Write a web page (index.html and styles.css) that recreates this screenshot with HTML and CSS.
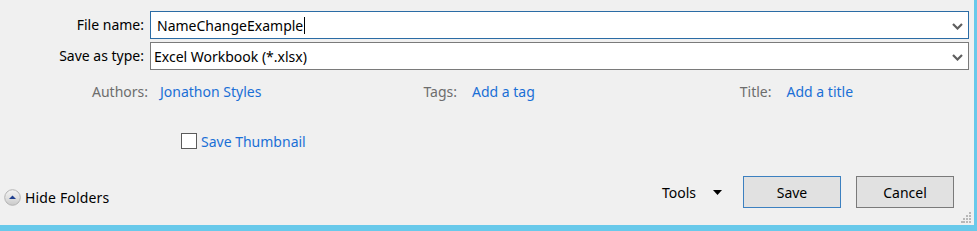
FILE: index.html
```html
<!DOCTYPE html>
<html>
<head>
<meta charset="utf-8">
<link rel="stylesheet" href="styles.css">
</head>
<body>
<div class="window">
  <div class="dialog">
    <div class="fields">
      <label class="label">File name:</label>
      <div class="combo combo-active">
        <span class="value">NameChangeExample</span><span class="caret"></span>
        <svg class="chev" width="11" height="7" viewBox="0 0 11 7"><path d="M1 1 L5.5 5.5 L10 1" fill="none" stroke="#5f5f5f" stroke-width="2.2"/></svg>
      </div>
      <label class="label">Save as type:</label>
      <div class="combo">
        <span class="value value-type">Excel Workbook (*.xlsx)</span>
        <svg class="chev" width="11" height="7" viewBox="0 0 11 7"><path d="M1 1 L5.5 5.5 L10 1" fill="none" stroke="#5f5f5f" stroke-width="2.2"/></svg>
      </div>
    </div>

    <div class="meta">
      <div class="meta-item meta-authors"><span class="meta-label">Authors:</span><span class="link">Jonathon Styles</span></div>
      <div class="meta-item meta-tags"><span class="meta-label">Tags:</span><span class="link">Add a tag</span></div>
      <div class="meta-item meta-title"><span class="meta-label">Title:</span><span class="link">Add a title</span></div>
    </div>

    <div class="thumb">
      <span class="checkbox"></span><span class="link">Save Thumbnail</span>
    </div>

    <div class="bottom">
      <div class="hide-folders">
        <svg class="hf-icon" width="17" height="17" viewBox="0 0 17 17">
          <defs>
            <linearGradient id="g" x1="0" y1="0" x2="0" y2="1">
              <stop offset="0" stop-color="#f4f4f4"/>
              <stop offset="0.5" stop-color="#e2e2e2"/>
              <stop offset="1" stop-color="#c9c9c9"/>
            </linearGradient>
          </defs>
          <circle cx="8.5" cy="8.5" r="7.8" fill="url(#g)" stroke="#b4b4b4" stroke-width="1"/>
          <path d="M5 10 L8.5 6.5 L12 10 Z" fill="#1f3f8f"/>
        </svg>
        <span class="hf-text">Hide Folders</span>
      </div>
      <div class="actions">
        <div class="tools"><span>Tools</span><svg width="9" height="5" viewBox="0 0 9 5"><path d="M0 0 L9 0 L4.5 5 Z" fill="#000"/></svg></div>
        <button class="btn btn-default">Save</button>
        <button class="btn">Cancel</button>
      </div>
    </div>
    <div class="grip">
      <svg width="11" height="11" viewBox="0 0 11 11">
        <g fill="#b8b8b8">
          <rect x="8" y="0" width="2" height="2"/>
          <rect x="5" y="3" width="2" height="2"/><rect x="8" y="3" width="2" height="2"/>
          <rect x="2" y="6" width="2" height="2"/><rect x="5" y="6" width="2" height="2"/><rect x="8" y="6" width="2" height="2"/>
          <rect x="0" y="9" width="2" height="2"/><rect x="2" y="9" width="2" height="2"/><rect x="5" y="9" width="2" height="2"/><rect x="8" y="9" width="2" height="2"/>
        </g>
      </svg>
    </div>
  </div>
  <div class="edge-right"></div>
</div>
<div class="edge-bottom"></div>
</body>
</html>
```

FILE: styles.css
```css
html, body {
  margin: 0;
  padding: 0;
}
body {
  width: 977px;
  height: 231px;
  background: #f0f0f0;
  font-family: "Noto Sans", "Open Sans", sans-serif;
  font-size: 14px;
  color: #000;
  overflow: hidden;
}
.window {
  display: flex;
  height: 225px;
}
.dialog {
  position: relative;
  width: 974px;
  display: flex;
  flex-direction: column;
}
.edge-right {
  width: 3px;
  background: #68c9ea;
}
.edge-bottom {
  height: 6px;
  background: #68c9ea;
}
.fields {
  display: grid;
  grid-template-columns: 150px 819px;
  row-gap: 3px;
  padding-top: 11px;
}
.label {
  text-align: right;
  padding-right: 6px;
  line-height: 28px;
}
.combo {
  height: 28px;
  box-sizing: border-box;
  border: 1px solid #7a7a7a;
  background: #fff;
  display: flex;
  align-items: center;
  position: relative;
}
.combo-active {
  border-color: #2b6ca5;
}
.value {
  padding-left: 6px;
}
.value-type {
  padding-left: 3px;
}
.caret {
  display: inline-block;
  width: 1px;
  height: 17px;
  background: #000;
  margin-left: 1px;
}
.chev {
  position: absolute;
  right: 5px;
  top: 11px;
}
.meta {
  display: flex;
  margin-top: 10px;
  height: 22px;
  align-items: center;
  color: #6d6d6d;
}
.meta-item {
  display: flex;
}
.meta-authors .meta-label {
  margin-right: 12px;
}
.meta-tags .meta-label {
  margin-right: 15px;
}
.meta-title .meta-label {
  margin-right: 15px;
}
.meta-authors {
  margin-left: 92px;
}
.meta-tags {
  margin-left: 162px;
}
.meta-title {
  margin-left: 205px;
}
.link {
  color: #1a6fd6;
}
.thumb {
  display: flex;
  align-items: center;
  margin-top: 29px;
  margin-left: 181px;
  height: 20px;
}
.checkbox {
  width: 16px;
  height: 16px;
  box-sizing: border-box;
  border: 1px solid #5a5a5a;
  background: #fff;
  margin-right: 4px;
}
.bottom {
  display: flex;
  justify-content: space-between;
  align-items: center;
  margin-top: 25px;
  height: 32px;
}
.hide-folders {
  display: flex;
  align-items: center;
  margin-left: 4px;
  margin-top: 10px;
}
.hf-icon {
  margin-right: 4px;
}
.hf-text {
  letter-spacing: 0.15px;
}
.actions {
  display: flex;
  align-items: center;
  margin-right: 20px;
}
.tools {
  display: flex;
  align-items: center;
  gap: 17px;
  margin-right: 21px;
}
.btn {
  width: 98px;
  height: 32px;
  box-sizing: border-box;
  background: #e1e1e1;
  border: 1px solid #7a7a7a;
  font-family: inherit;
  font-size: 14px;
  color: #000;
  padding: 0;
  margin: 0;
}
.btn-default {
  border-color: #3c80c0;
  margin-right: 15px;
}
.grip {
  position: absolute;
  right: 2px;
  bottom: 2px;
  line-height: 0;
}
```
